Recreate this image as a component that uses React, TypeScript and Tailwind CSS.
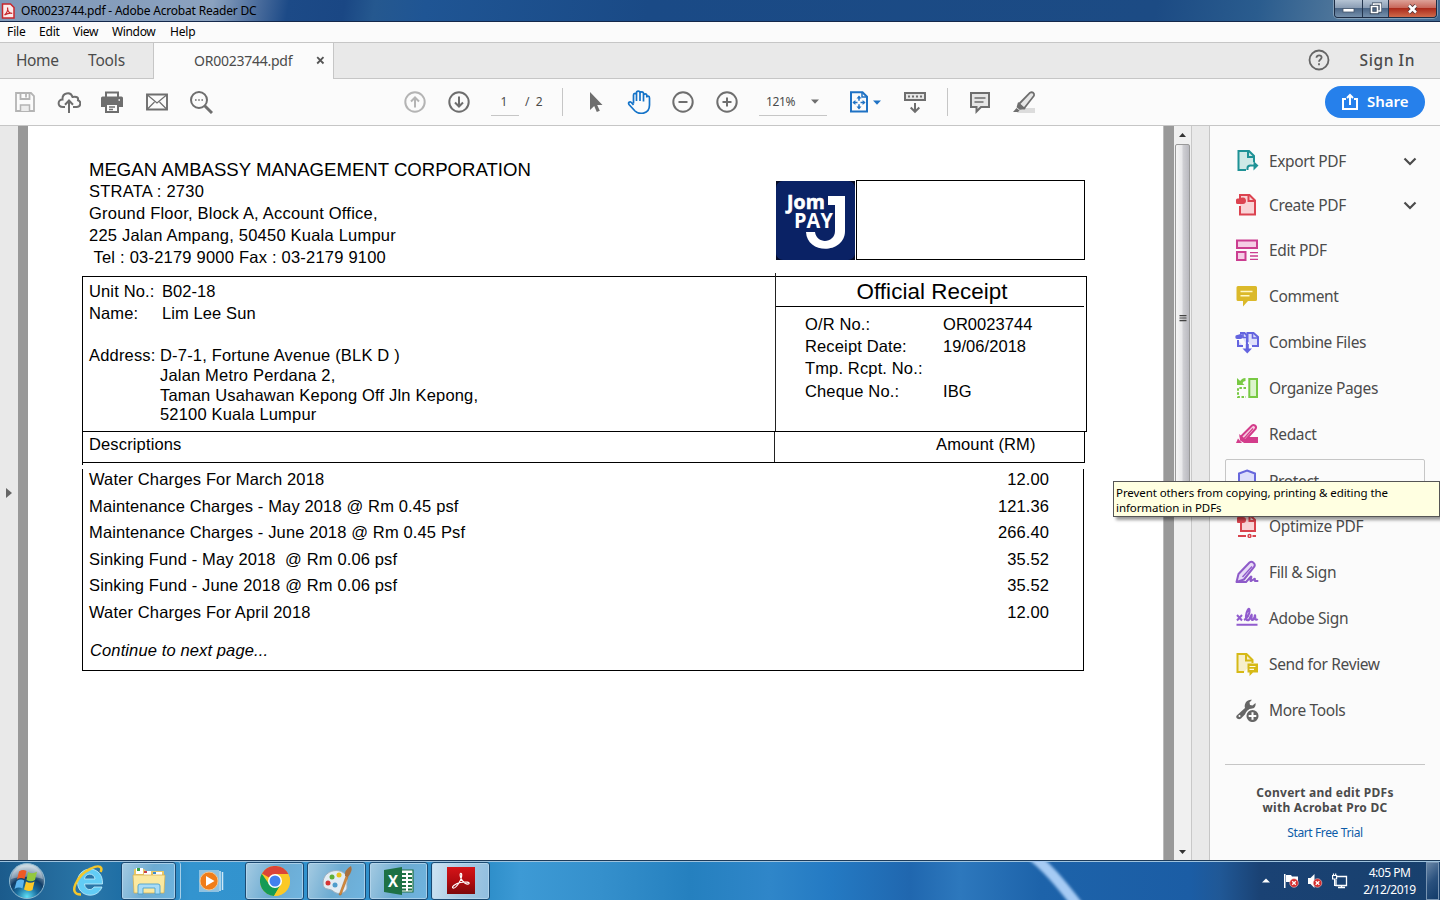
import React from "react";

type Kids = { children?: React.ReactNode };

function Icon({ children, className = "" }: Kids & { className?: string }) {
  return (
    <svg width="24" height="24" viewBox="0 0 24 24" fill="none" strokeWidth="2" className={`block shrink-0 ${className}`}>
      {children}
    </svg>
  );
}

function TitleBar() {
  return (
    <div className="relative flex h-[22px] shrink-0 items-start border-b border-[#14284b] bg-[linear-gradient(100deg,#7f98b8_0px,#8ba2bf_210px,#4a6c9c_255px,#1c4a87_285px,#1a4784_340px,#25588f_370px,#1f5594_420px,#1a4a86_640px,#1c4b84_1140px,#2a5c8e_1240px,#53799c_1330px,#3d6690_1440px)]">
      <svg width="14" height="16" viewBox="0 0 14 16" className="ml-px mt-[3px] shrink-0">
        <path d="M1.5 1h8l3.500 3.500v10.500h-11.500z" fill="#fbeaea" stroke="#c8262b" strokeWidth="1.500" />
        <path d="M3.500 12c2-1.500 4-5 3-7.500M6.600 6c.5 3 2 4.300 4.600 4.300-3-.8-5 .2-7.700 1.700" fill="none" stroke="#c8262b" strokeWidth="1.200" />
      </svg>
      <span className="ml-[6px] mt-[2px] whitespace-pre text-[12px] leading-[18px] tracking-[-0.2px] text-black">OR0023744.pdf - Adobe Acrobat Reader DC</span>
      <div className="ml-auto mr-[3px] flex h-[18px] overflow-hidden rounded-b-[4px] border border-t-0 border-[#1c2c44] shadow-[0_0_0_1px_#a9bccd99]">
        <div className="flex w-[28px] items-center justify-center border-r border-[#24364e] bg-[linear-gradient(#b5c4d4,#8b9eb5_45%,#4b6686_50%,#7590ac)]">
          <svg width="13" height="8" viewBox="0 0 13 8"><rect x="1" y="3.500" width="11" height="3.500" fill="#fff" stroke="#44556b" strokeWidth=".8" /></svg>
        </div>
        <div className="flex w-[26px] items-center justify-center border-r border-[#24364e] bg-[linear-gradient(#b5c4d4,#8b9eb5_45%,#4b6686_50%,#7590ac)]">
          <svg width="14" height="13" viewBox="0 0 14 13" fill="none">
            <path d="M4.500 3V2h7v7h-2" stroke="#344458" strokeWidth="3" /><path d="M2.500 4.500h6v6h-6z" stroke="#344458" strokeWidth="3.400" />
            <path d="M4.500 3V2h7v7h-2M2.500 4.500h6v6h-6z" stroke="#fff" strokeWidth="1.700" />
          </svg>
        </div>
        <div className="flex w-[47px] items-center justify-center bg-[linear-gradient(#dda198,#c8685b_45%,#ac2b1b_50%,#cf6a4b)]">
          <svg width="13" height="12" viewBox="0 0 13 12"><path d="M3 2.500l7 7M10 2.500l-7 7" stroke="#4d3338" strokeWidth="4" /><path d="M3 2.500l7 7M10 2.500l-7 7" stroke="#fff" strokeWidth="2.500" /></svg>
        </div>
      </div>
    </div>
  );
}

function MenuBar() {
  return (
    <div className="flex h-[20px] shrink-0 items-center bg-[#fbfbfb] pl-[7px] text-[12px] leading-[18px] text-black">
      <span className="w-[32px] tracking-[-0.1px]">File</span>
      <span className="w-[34px] tracking-[-0.2px]">Edit</span>
      <span className="w-[39px] tracking-[-0.3px]">View</span>
      <span className="w-[58px] tracking-[-0.35px]">Window</span>
      <span className="tracking-[-0.2px]">Help</span>
    </div>
  );
}

function TabBar() {
  return (
    <div className="flex h-[37px] shrink-0 border-y border-[#c6c6c6] bg-[#e9e9e9] text-[#4b4b4b]">
      <div className="flex w-[154px] shrink-0 items-center border-r border-[#c6c6c6] pl-4 text-[15.500px]">
        <span className="w-[72px] tracking-[-0.4px]">Home</span>
        <span className="tracking-[-0.15px]">Tools</span>
      </div>
      <div className="-mb-px flex w-[180px] shrink-0 items-center border-r border-[#c6c6c6] bg-[#fbfbfb] pb-[2px] pl-[40px] text-[14px]">
        <span className="w-[122px] tracking-[-0.25px]">OR0023744.pdf</span>
        <svg width="9" height="9" viewBox="0 0 9 9"><path d="M1.200 1.200l6.300 6.300M7.500 1.200L1.200 7.500" stroke="#555" strokeWidth="1.800" /></svg>
      </div>
      <div className="ml-auto flex items-center pr-[25px]">
        <svg width="22" height="22" viewBox="0 0 22 22" fill="none" stroke="#666" strokeWidth="1.800" className="mb-[2px] mr-[30px]">
          <circle cx="11" cy="11" r="9.500" />
          <path d="M8.500 8.700c0-3.200 5.100-3 5.100-.1 0 1.900-2.600 1.900-2.600 4.100M11 14.200v2" />
        </svg>
        <span className="text-[15.500px] font-medium tracking-[0.6px]">Sign In</span>
      </div>
    </div>
  );
}

function Toolbar() {
  return (
    <div className="flex h-[47px] shrink-0 items-center border-b border-[#c6c6c6] bg-[#fbfbfb] pl-[13px] text-[#4b4b4b]">
      <Icon className="stroke-[#b4b4b4]"><path d="M3 3h15l3 3v15H3zM7.500 3v6h9V3M13 4v3.500" strokeWidth="1.800" /><path d="M7.500 21v-6h9v6" fill="#ececec" strokeWidth="1.500" /></Icon>
      <Icon className="ml-5 stroke-[#6e6e6e]"><path d="M8 17H6C0 17 .5 9.500 5.500 9.500 5 3 13.500 1 15.500 7c5-.8 6 .8 5.500 3.300C24.500 11.500 24 17 19.500 17H16M12 23V11M8 14.700l4-4.200 4 4.200" /></Icon>
      <Icon className="ml-[19px] stroke-[#6e6e6e]"><path d="M6 7V2.500h12V7" /><path d="M1 8q0-1.500 1.500-1.500h19Q23 6.500 23 8v9h-4v-3H5v3H1z" fill="#6e6e6e" stroke="none" /><path d="M6 14h12v8H6z" fill="#fbfbfb" /><path d="M9 17h6M9 19.500h4" strokeWidth="1.300" /><path d="M18.500 10h1.500" stroke="#fff" strokeWidth="1.500" /></Icon>
      <Icon className="ml-[21px] stroke-[#6e6e6e]"><path d="M2 4.500h20v15H2z" strokeWidth="1.900" /><path d="M2.500 5l9.500 8 9.500-8M2.500 19l7-7M21.500 19l-7-7" strokeWidth="1.200" /></Icon>
      <Icon className="ml-5 stroke-[#6e6e6e]"><circle cx="10" cy="10" r="8" /><path d="M15.700 15.700L23 23" strokeWidth="3" /><path d="M6 10h1.600M9.200 10h1.600M12.400 10H14" strokeWidth="1.700" /></Icon>
      <Icon className="ml-[190px] stroke-[#b4b4b4]"><circle cx="12" cy="12" r="9.700" /><path d="M12 17.500V8M8 11.500l4-4 4 4" /></Icon>
      <Icon className="ml-5 stroke-[#6e6e6e]"><circle cx="12" cy="12" r="9.700" /><path d="M12 6.500V16M8 12.500l4 4 4-4" /></Icon>
      <div className="ml-[20px] flex h-[28px] w-[28px] items-center justify-center border-b border-[#c6c6c6] pr-[2px] text-[12px]">1</div>
      <span className="ml-[6px] w-[20px] whitespace-pre text-[12px]">/  2</span>
      <div className="ml-[17px] h-[28px] w-px bg-[#c6c6c6]" />
      <Icon className="ml-[21px]"><path d="M6 2v18l4.200-4 2.600 6 3-1.300-2.600-5.700h5.300z" fill="#6e6e6e" /></Icon>
      <Icon className="ml-[19px] stroke-[#1473c8]"><path d="M6.500 13.500V5c0-2.200 3-2.200 3 0v6V2.800c0-2.200 3.500-2.200 3.500 0V11 3.500c0-2.200 3.500-2.200 3.500 0v8-6c0-2.200 3.300-2.200 3.300 0v2c0-2.100 2.700-1.800 2.700.5v7c0 10-11 9.500-14.500 6L2 14.500c-1.200-2 .8-3.300 2.200-2.200L6.500 15" strokeWidth="1.700" /></Icon>
      <Icon className="ml-5 stroke-[#6e6e6e]"><circle cx="12" cy="12" r="9.700" /><path d="M7.500 12h9" /></Icon>
      <Icon className="ml-5 stroke-[#6e6e6e]"><circle cx="12" cy="12" r="9.700" /><path d="M7.500 12h9M12 7.500v9" /></Icon>
      <div className="ml-5 flex h-[28px] w-[68px] items-center border-b border-[#c6c6c6] pl-[7px] text-[12px]">
        <span className="w-[45px] tracking-[-0.4px]">121%</span>
        <svg width="8" height="5" viewBox="0 0 8 5"><path d="M0 .5h8L4 4.800z" fill="#6e6e6e" /></svg>
      </div>
      <Icon className="ml-5 stroke-[#1f72c4]">
        <path d="M4 2.200h11.500L20 6.700v14.700H4z" /><path d="M15 2.500V7h5" strokeWidth="1.500" />
        <path d="M12 6.800v4M12 14.200v4M6.500 12.500h4M13.500 12.500h4" strokeWidth="1.500" />
        <path d="M12 5.500l2.500 3h-5zM12 19.500l2.500-3h-5zM5.400 12.500l3-2.500v5zM18.600 12.500l-3-2.500v5z" fill="#1f72c4" stroke="none" />
      </Icon>
      <svg width="8" height="5" viewBox="0 0 8 5" className="ml-[2px]"><path d="M0 .5h8L4 4.800z" fill="#1f72c4" /></svg>
      <Icon className="ml-[22px] stroke-[#6e6e6e]"><path d="M2 3h20v7H2z" fill="#e6e6e6" /><path d="M5 6.500h14" strokeDasharray="2 2" strokeWidth="1.800" /><path d="M12 13v8.500M7.700 17.500l4.300 4.300 4.300-4.300" /></Icon>
      <div className="ml-[20px] h-[28px] w-px bg-[#c6c6c6]" />
      <Icon className="ml-5 stroke-[#6e6e6e]"><path d="M3 3h18v14h-8l-4.500 4.500V17H3z" fill="#e6e6e6" /><path d="M6.500 8h11M6.500 12h9" strokeWidth="1.400" /></Icon>
      <Icon className="ml-5 stroke-[#6e6e6e]"><path d="M7 18h16v5H5z" fill="#dcdcdc" stroke="none" /><path d="M7 14L18 2.700c2.500-1.300 4.700.5 4 3L12 18.500z" fill="#e6e6e6" strokeWidth="1.800" /><path d="M6.500 13.500l5.500 5-4 .5-2.500-2z" fill="#6e6e6e" strokeWidth="1.600" /><path d="M4.500 18l3 2.500-1.500 1.500H1z" fill="#6e6e6e" stroke="none" /></Icon>
      <div className="ml-auto mr-[15px] flex h-[32px] w-[100px] items-center rounded-full bg-[#2680eb] pl-[16px] text-[15px] font-semibold text-white">
        <svg width="18" height="18" viewBox="0 0 18 18" fill="none" stroke="#fff" strokeWidth="2"><path d="M5 6H2v10h14V6h-3M9 12V3M6 5l3-3 3 3" /></svg>
        <span className="ml-2 pb-[2px] tracking-[0px]">Share</span>
      </div>
    </div>
  );
}

const headerLines = ["STRATA : 2730", "Ground Floor, Block A, Account Office,", "225 Jalan Ampang, 50450 Kuala Lumpur", " Tel : 03-2179 9000 Fax : 03-2179 9100"];
const receipt = [["O/R No.:", "OR0023744"], ["Receipt Date:", "19/06/2018"], ["Tmp. Rcpt. No.:", ""], ["Cheque No.:", "IBG"]];
const charges = [
  ["Water Charges For March 2018", "12.00"],
  ["Maintenance Charges - May 2018 @ Rm 0.45 psf", "121.36"],
  ["Maintenance Charges - June 2018 @ Rm 0.45 Psf", "266.40"],
  ["Sinking Fund - May 2018  @ Rm 0.06 psf", "35.52"],
  ["Sinking Fund - June 2018 @ Rm 0.06 psf", "35.52"],
  ["Water Charges For April 2018", "12.00"],
];

function JomPayLogo() {
  return (
    <svg width="79" height="79" viewBox="0 0 79 79" className="mt-px">
      <rect width="79" height="79" fill="#050b26" />
      <rect width="79" height="79" rx="7" fill="#0a2265" />
      <path d="M52 15h17v35c0 23-38 24-39 1h9c2 13 20 11 20-1V24h-7z" fill="#fff" />
      <g fill="#fff" fontFamily="Open Sans, sans-serif" fontWeight="700">
        <text x="11" y="28" fontSize="20" textLength="38" lengthAdjust="spacingAndGlyphs" stroke="#fff" strokeWidth=".6">Jom</text>
        <text x="18" y="47" fontSize="21" textLength="39" lengthAdjust="spacingAndGlyphs" stroke="#0a2265" strokeWidth="2" paintOrder="stroke">PAY</text>
      </g>
    </svg>
  );
}

function DocumentPage() {
  return (
    <div className="flex h-full w-[1135px] shrink-0 flex-col bg-white pl-[54px] pt-[32px] font-['Liberation_Sans',Arial,sans-serif] text-[16.500px] tracking-[0.14px] text-black">
      <div className="flex h-[118px] shrink-0">
        <div className="w-[694px] whitespace-pre pl-[7px] pt-px leading-[22px] tracking-[0.22px]">
          <div className="-mb-px text-[18.600px] tracking-[-0.01px]">MEGAN AMBASSY MANAGEMENT CORPORATION</div>
          {headerLines.map((l) => <div key={l}>{l}</div>)}
        </div>
        <div className="flex pt-[22px]">
          <JomPayLogo />
          <div className="ml-[1px] h-[80px] w-[229px] border border-black" />
        </div>
      </div>
      <div className="flex h-[156px] w-[1005px] shrink-0 border border-black">
        <div className="w-[692px] whitespace-pre pl-[6px] pt-[3px]">
          <div className="flex h-[22px] items-center"><span className="w-[73px]">Unit No.:</span><span className="tracking-[0.05px]">B02-18</span></div>
          <div className="flex h-[22px] items-center"><span className="w-[73px]">Name:</span><span className="tracking-[0.1px]">Lim Lee Sun</span></div>
          <div className="flex pt-[22px] leading-[19.800px] tracking-[0.18px]">
            <span className="w-[71px]">Address:</span>
            <div>
              <div>D-7-1, Fortune Avenue (BLK D )</div>
              <div>Jalan Metro Perdana 2,</div>
              <div>Taman Usahawan Kepong Off Jln Kepong,</div>
              <div>52100 Kuala Lumpur</div>
            </div>
          </div>
        </div>
        <div className="-mt-[4px] w-[311px] border-l border-[#222] pt-[3px]">
          <div className="mr-[2px] flex h-[31px] items-center justify-center border-b border-black pl-1 pt-px text-[22.400px] tracking-[0.05px]">Official Receipt</div>
          <div className="pl-[29px] pt-[5.800px]">
            {receipt.map(([k, v]) => (
              <div key={k} className="flex h-[22.400px] items-center"><span className="w-[138px]">{k}</span><span className="tracking-[0.05px]">{v}</span></div>
            ))}
          </div>
        </div>
      </div>
      <div className="-mt-px flex h-[32px] w-[1003px] shrink-0 border border-black">
        <div className="w-[692px] border-r border-[#222] pl-[6px] leading-[25px]">Descriptions</div>
        <div className="pl-[161px] leading-[25px]">Amount (RM)</div>
      </div>
      <div className="flex h-[6px] w-[1003px] shrink-0"><div className="h-[2px] w-px bg-black" /></div>
      <div className="h-[202px] w-[1002px] shrink-0 border border-t-0 border-black pl-[6px] pr-[34px]">
        <div className="-mt-[3px]">
          {charges.map(([name, amount]) => (
            <div key={name} className="flex h-[26.600px] items-center justify-between whitespace-pre"><span>{name}</span><span className="tracking-[0.1px]">{amount}</span></div>
          ))}
        </div>
        <div className="mt-[12.400px] pl-px leading-[24px] tracking-[0.12px] italic">Continue to next page...</div>
      </div>
    </div>
  );
}

const tools: { label: string; h: string; art: React.ReactNode; chevron?: boolean; hover?: boolean }[] = [
  { label: "Export PDF", h: "h-[44px]", chevron: true, art: <g stroke="#1f9296"><path d="M11 21H3.500V2h10.500l5 5v6" fill="#cfe9e6" /><path d="M13 2.500V8h6" /><path d="M12.500 21v-2c0-2 1-2.500 3-2.500h4" fill="none" /><path d="M18.500 12l5 4.500-5 5z" fill="#1f9296" stroke="none" /></g> },
  { label: "Create PDF", h: "h-[44px]", chevron: true, art: <g stroke="#dc4350"><path d="M5 13v8.500h15V7.500L14.500 2H5v4" fill="#f9d3d6" /><path d="M13.500 2.500V8h6" fill="none" /><path d="M2.500 5.500C6 5.500 6 4.500 8 4.500c2.500 0 3 2 3 3.300 0 2-1 3.200-3 3.200H2.500Q1 11 1 9.500V7q0-1.500 1.500-1.500z" fill="#dc4350" stroke="none" /></g> },
  { label: "Edit PDF", h: "h-[46px]", art: <g stroke="#cb3d90"><path d="M2 2.500h20V10H2zM2 14h8.500v8H2z" fill="#f5cde5" /><path d="M15 14.700h8M15 18h8M15 21.300h8" strokeWidth="1.300" /></g> },
  { label: "Comment", h: "h-[46px]", art: <g><path d="M3 2h17.500q1.500 0 1.500 1.500v12q0 1.500-1.500 1.500H13l-5 5.500V17H3q-1.500 0-1.500-1.500v-12Q1.500 2 3 2z" fill="#dbb92a" /><path d="M5.500 7.500h12M5.500 11.700h9" stroke="#fff8c8" strokeWidth="1.500" /></g> },
  { label: "Combine Files", h: "h-[46px]", art: <g stroke="#6464df"><path d="M3 10v6h5M5 3h4.500L12 5.500V16" fill="#dedffb" /><path d="M12.500 12V3h6L23 7v9h-6" fill="#dedffb" /><path d="M17.500 3v5H23M8 3.500v4h4" fill="none" strokeWidth="1.600" /><path d="M2 5C4 5 4 4 5.500 4 8.500 4 8.500 9 5.500 9H2Q.3 9 .3 7T2 5z" fill="#6464df" stroke="none" /><path d="M12.300 14v5" strokeWidth="3" /><path d="M7.500 18.500h9.500L12.300 23.500z" fill="#6464df" stroke="none" /></g> },
  { label: "Organize Pages", h: "h-[46px]", art: <g stroke="#78c943"><path d="M14.300 3H22v18h-7.700z" fill="#dcf4cd" /><path d="M11 12H3v9h8" strokeDasharray="2.500 1.600" /><path d="M10.500 3.500c-2 0-3.500 1-4.500 3" strokeWidth="3" /><path d="M2 2v7h7.500z" fill="#78c943" stroke="none" /></g> },
  { label: "Redact", h: "h-[46px]", art: <g stroke="#d33c8b"><path d="M13 15h10v6H8z" fill="#d33c8b" stroke="none" /><path d="M6 14.500L17 3.500c2-1.500 5 .8 3.700 3.200L10 18.500z" fill="#f8cfe2" /><path d="M9 16.500L18 6.500" strokeWidth="1.200" /><path d="M5.500 14.500l4.500 4-2 .7-2-1.200z" fill="#d33c8b" /><path d="M3 16.500l4 4.500H1z" fill="#d33c8b" stroke="none" /></g> },
  { label: "Protect", h: "mt-[2px] mb-px h-[43px]", hover: true, art: <g stroke="#6767dc"><path d="M12 1.500l8 3v8c0 5-3.500 8-8 10-4.500-2-8-5-8-10v-8z" fill="#dddefb" /></g> },
  { label: "Optimize PDF", h: "h-[46px]", art: <g stroke="#d9434d"><path d="M6 8v9h14V6L16 2H7" fill="#f9d3d6" /><path d="M14.500 2v5H20" /><path d="M3 3h5q3 0 3 3t-3 3H3Q2 9 2 8V4q0-1 1-1z" fill="#d9434d" stroke="none" /><path d="M3 22h8M17.500 22H21" /><circle cx="14.500" cy="22" r="1.400" strokeWidth="1.500" /></g> },
  { label: "Fill & Sign", h: "h-[46px]", art: <g stroke="#8e5bc9" strokeLinejoin="round"><path d="M1.500 22l2-8L14.500 2.500c2.500-2 6.500 1 4.800 4.200L9 19.500z" fill="#e8dbf7" /><path d="M7.500 17L17 6.500" strokeWidth="1.300" /><path d="M1.500 22H11l5-5.500c1.500 0-2 5 .2 4.500l3.300-2.300c1.300 0-.8 2.300.8 2.300h3" /></g> },
  { label: "Adobe Sign", h: "h-[46px]", art: <g stroke="#915cce"><path d="M2 9l5 5.500M7 9l-5 5.500M1.500 18.800h21" /><path d="M9 14c3-1.500 6-6 5.500-10-.5-3-3 1-3.500 6-.3 6 3 5 4.500 1 2-5 1-1 1 1 .2 3 2 2.500 3-1 1-4 .5 0 .7 1.500.3 1.500 1.300 1.500 2.500.5" strokeWidth="2.200" /></g> },
  { label: "Send for Review", h: "h-[46px]", art: <g stroke="#d6b916"><path d="M9 20H2.500V2h9l6 6v3" fill="#f7efca" /><path d="M11 2v6.500h6.500" /><path d="M12.500 11.500h10.500v9h-5L14.500 24v-3.500h-2z" fill="#d6b916" stroke="none" /><path d="M14.500 14.500h6M14.500 17.300h4.500" stroke="#fffbdd" strokeWidth="1.200" /></g> },
  { label: "More Tools", h: "h-[46px]", art: <g fill="#666"><path d="M1.700 17.500L10 10c-1.200-4.500 2-9 7-8.300L14.500 4.500 15 7l2.500.5L20.500 5c.8 3.500-2 6.500-5.500 6.300L6 20.500c-2.500 2-6-.7-4.300-3z" /><circle cx="4.500" cy="18" r="1" fill="#fff" /><circle cx="17.500" cy="18" r="6.800" fill="#666" stroke="#fbfbfb" strokeWidth="1.500" /><path d="M13.700 18h7.600M17.500 14.200v7.600" stroke="#fff" strokeWidth="2" /></g> },
];

function ToolsPanel() {
  return (
    <div className="flex w-[230px] shrink-0 flex-col bg-[#fbfbfb] px-[15px] pt-[13px] text-[#4b4b4b]">
      {tools.map((t) => (
        <div key={t.label} className={`flex ${t.h} shrink-0 items-center text-[15.500px] ${t.hover ? "rounded-[2px] border border-[#c6c6c6] pl-[9px]" : "pl-[10px]"}`}>
          <Icon>{t.art}</Icon>
          <span className="ml-[10px] whitespace-nowrap pt-[2px] tracking-[-0.36px]">{t.label}</span>
          {t.chevron && <svg width="14" height="9" viewBox="0 0 14 9" fill="none" className="ml-auto mr-[8px]"><path d="M1.500 1.500L7 7l5.500-5.500" stroke="#4b4b4b" strokeWidth="2.200" /></svg>}
        </div>
      ))}
      <div className="mt-[31px] border-t border-[#c6c6c6] pt-[20px] text-center">
        <div className="text-[12px] font-bold leading-[15px] tracking-[0.26px]"><div>Convert and edit PDFs</div><div>with Acrobat Pro DC</div></div>
        <div className="mt-[10px] text-[12px] leading-[16px] tracking-[-0.38px] text-[#0d5ba8]">Start Free Trial</div>
      </div>
    </div>
  );
}

function Scrollbar() {
  return (
    <div className="flex w-[18px] shrink-0 flex-col items-center border-r border-[#c8c8c8] bg-[#f0f0f0] px-px">
      <div className="flex h-[18px] items-center"><svg width="7" height="4" viewBox="0 0 7 4"><path d="M0 4l3.500-4L7 4z" fill="#333" /></svg></div>
      <div className="flex h-[350px] w-[15px] items-center justify-center rounded-[2px] border border-[#999] bg-[linear-gradient(90deg,#f5f5f5,#e8e8ea_45%,#cfcfd3_55%,#b9b9bf)]">
        <svg width="8" height="8" viewBox="0 0 8 8"><path d="M.5.500h7M.5 3h7M.5 5.500h7" stroke="#444" /><path d="M.5 1.500h7M.5 4h7M.5 6.500h7" stroke="#888" strokeWidth=".5" /></svg>
      </div>
      <div className="mt-auto flex h-[16px] items-center"><svg width="7" height="4" viewBox="0 0 7 4"><path d="M0 0l3.500 4L7 0z" fill="#333" /></svg></div>
    </div>
  );
}

function TaskButton({ children, active }: Kids & { active?: boolean }) {
  return (
    <div className={`mr-[3px] flex h-[38px] w-[59px] shrink-0 items-center justify-center rounded-[3px] border border-[#1b4a72] shadow-[inset_0_0_0_1px_#b9d9efbb] ${active ? "bg-[linear-gradient(100deg,#cfe4f2,#a9cbe4_50%,#8fbddf)]" : "bg-[linear-gradient(110deg,#a5cbe2,#6cabd2_50%,#6fb4df)]"}`}>
      {children}
    </div>
  );
}

function ErrorDot({ x }: { x: number }) {
  return <g><circle cx={x} cy="10" r="4.300" fill="#d32b2b" stroke="#f3c4c4" strokeWidth=".6" /><path d={`M${x - 1.800} 8.200l3.600 3.600M${x + 1.800} 8.200l-3.600 3.600`} stroke="#fff" strokeWidth="1.300" /></g>;
}

function Taskbar() {
  return (
    <div className="relative flex h-[40px] shrink-0 items-center overflow-hidden border-t border-[#1d3b5a] bg-[linear-gradient(90deg,#1b5b8c_0px,#2a76a8_90px,#1f6fa5_120px,#3394cf_190px,#2f8fca_490px,#3d9ad5_520px,#3590cc_600px,#2580bf_690px,#2f86c9_770px,#247ac3_830px,#2067af_910px,#2d78bd_960px,#1d63aa_1040px,#1b5da5_1190px,#205896_1220px,#1a4274_1260px,#18406d_1440px)] shadow-[inset_0_1px_0_#9fc3de]">
      <svg width="1440" height="39" viewBox="0 0 1440 39" className="pointer-events-none absolute left-0 top-0">
        <defs><filter id="soft" x="-40%" y="-20%" width="180%" height="140%" colorInterpolationFilters="sRGB"><feGaussianBlur stdDeviation="1.500" /></filter></defs>
        <path d="M1029-8c17 13 30 28 53 58" fill="none" stroke="#a6cbf4" strokeWidth="10.500" filter="url(#soft)" />
      </svg>
      <svg width="38" height="38" viewBox="0 0 38 38" className="relative ml-[8px] shrink-0">
        <defs>
          <radialGradient id="orb" cx=".5" cy=".95" r=".9"><stop offset="0" stopColor="#5fe0f5" /><stop offset=".35" stopColor="#176a9d" /><stop offset=".6" stopColor="#123d66" /><stop offset="1" stopColor="#c5d5df" /></radialGradient>
        </defs>
        <circle cx="19" cy="19" r="17.500" fill="url(#orb)" stroke="#8fb9d0" strokeWidth="1" />
        <path d="M3 17C5-1 33-1 35 17 26 14 13 14 3 17z" fill="#fff" opacity=".3" />
        <path d="M11 9.500q4-2.500 7.500-.5L16.500 17q-4-2-7.500.5z" fill="#ee5a24" />
        <path d="M20 10q4.500 2.500 9-.2L27 18q-4 2.500-8.500 0z" fill="#93c83e" />
        <path d="M8.700 19q4-2.500 7.500-.5L14.500 26.500q-4-2-8 .5z" fill="#5db5f0" />
        <path d="M18 19.500q4.500 2.500 8.500 0L24.500 28q-4 2-8.500-.5z" fill="#fdc827" />
      </svg>
      <svg width="34" height="34" viewBox="0 0 34 34" className="relative ml-[26px] shrink-0">
        <path fillRule="evenodd" d="M30.500 20H12.500c.5 6.500 7.500 7 9.500 3h8C25 36 5.500 33 5.500 18 5.500 1 31.500 0 30.500 20zM12.500 15h10.500c-.5-6.500-10-6.500-10.500 0z" fill="#62ccf5" stroke="#c4f0ff" strokeWidth=".8" />
        <path d="M9 30.500C-5 31 5 11 19 4.500c9-4.500 12-1 9.500 3.500" fill="none" stroke="#f3c72c" strokeWidth="2.500" />
      </svg>
      <div className="relative ml-[15px] flex h-[38px] w-[60px] shrink-0 rounded-[3px] border-r border-[#a5cfe8]">
        <div className="flex h-[38px] w-[55px] items-center justify-center rounded-[3px] border border-[#1b4a72] bg-[linear-gradient(110deg,#a5cbe2,#6cabd2_50%,#6fb4df)] shadow-[inset_0_0_0_1px_#b9d9efbb]">
          <svg width="34" height="30" viewBox="0 0 34 30">
            <path d="M2 3h10l2 2h18v22H2z" fill="#e9c866" /><path d="M4 2h7v6H4z" fill="#fff" /><path d="M5 2h3v3H5z" fill="#37a345" /><path d="M12 5h7v4h-7zM21 6h9v4h-9z" fill="#fff" /><path d="M12 5h3v2h-3z" fill="#c44" /><path d="M21 6h3v2h-3z" fill="#3a8bd0" />
            <path d="M1 9h32l-1 18H2z" fill="#fbe9a0" stroke="#d4ad4c" strokeWidth=".7" />
            <path d="M6 28v-8q0-2 2-2h18q2 0 2 2v8h-5v-6H11v6z" fill="#a9dcf6" stroke="#4c9fcc" strokeWidth=".9" />
          </svg>
        </div>
      </div>
      <svg width="28" height="26" viewBox="0 0 28 26" className="relative ml-[17px] shrink-0">
        <path d="M1 2h20v22H1z" fill="#8ec2e2" /><path d="M22 3v20M24.500 4v18" stroke="#cfe8f6" strokeWidth="1.500" />
        <circle cx="11" cy="13" r="9" fill="#f07d1a" stroke="#f5c48c" /><path d="M8 8l8.500 5L8 18z" fill="#fff" />
      </svg>
      <div className="relative ml-[19px] flex">
        <TaskButton>
          <svg width="30" height="30" viewBox="0 0 30 30"><circle cx="15" cy="15" r="15" fill="#fbc926" /><path d="M15 15L2 7.500A15 15 0 0 1 28.300 8H15z" fill="#dc4437" /><path d="M1.800 7.800A15 15 0 0 0 14 30l7-12H9z" fill="#169b55" /><path d="M28.500 8.500H15l6.500 9L14 30A15 15 0 0 0 28.500 8.500z" fill="#fbc926" /><circle cx="15" cy="15" r="7" fill="#fff" /><circle cx="15" cy="15" r="5.500" fill="#4280ef" /></svg>
        </TaskButton>
        <TaskButton>
          <svg width="32" height="32" viewBox="0 0 32 32"><path d="M2 18C2 6 17 2 24 9c5 5 1 8 2 12 1 7-9 10-14 5-3-3-10 0-10-8z" fill="#e3edf4" stroke="#9cafbd" /><circle cx="7" cy="18" r="2.500" fill="#d63434" /><circle cx="11" cy="12" r="2.500" fill="#5fae38" /><circle cx="18" cy="10" r="2.500" fill="#ecc21d" /><circle cx="14" cy="20" r="2.500" fill="#4f9dcc" /><path d="M18 30l7-19 2 1-7 18z" fill="#d58a3b" stroke="#a66426" strokeWidth=".5" /><path d="M24 11q-1-6 6-10 2 5-3 11z" fill="#a8703f" /></svg>
        </TaskButton>
        <TaskButton>
          <svg width="32" height="30" viewBox="0 0 32 30"><path d="M15 4h15v22H15z" fill="#fff" stroke="#217346" strokeWidth="1.200" /><path d="M19 8h4M25 8h4M19 12h4M25 12h4M19 16h4M25 16h4M19 20h4M25 20h4M19 23.500h4M25 23.500h4" stroke="#217346" strokeWidth="2" /><path d="M1 4l18-3v28L1 26z" fill="#1e7145" /><text x="5" y="21" fill="#fff" fontSize="16" fontWeight="700" fontFamily="Open Sans, sans-serif" textLength="10" lengthAdjust="spacingAndGlyphs">X</text></svg>
        </TaskButton>
        <TaskButton active>
          <svg width="28" height="27" viewBox="0 0 28 27"><defs><linearGradient id="red" x2="0" y2="1"><stop stopColor="#d51418" /><stop offset=".5" stopColor="#b40b10" /><stop offset="1" stopColor="#7d080b" /></linearGradient></defs><path d="M0 0h28v27H0z" fill="url(#red)" /><path d="M6 21c-2-1 2.500-4.500 7.500-5.500 5.500-1.100 9.500-.3 8.500 1.200-1.500 1.500-7-1.200-8.500-6.700-1.200-4.500 1.500-5 1.200-1C14.200 14 8.500 22 6 21z" fill="none" stroke="#fff" strokeWidth="1.200" /></svg>
        </TaskButton>
      </div>
      <div className="relative ml-auto flex h-full items-center text-white">
        <svg width="8" height="5" viewBox="0 0 8 5" className="mr-[14px]"><path d="M0 4.500L4 .5l4 4z" fill="#fff" /></svg>
        <svg width="16" height="16" viewBox="0 0 16 16" className="mr-[8px]"><path d="M0 1h1.500v14H0z" fill="#fff" /><path d="M2 2h5l1 1.500h6V9H2z" fill="#fff" /><ErrorDot x={10} /></svg>
        <svg width="16" height="16" viewBox="0 0 16 16" className="mr-[8px]"><path d="M0 5h2.500l4-4v14l-4-4H0z" fill="#fff" /><ErrorDot x={9.500} /></svg>
        <svg width="16" height="16" viewBox="0 0 16 16" className="mr-[12px]" fill="none" stroke="#fff"><path d="M5 3.500h9.500v9H4V7M6 14.500h7M9.500 12.500v2" strokeWidth="1.300" /><path d="M.6 2.500h4V6h-4zM1.500.5v2M3.700.5v2M2.600 6v6.500H4" strokeWidth="1.200" /></svg>
        <div className="w-[59px] whitespace-nowrap text-center text-[12px] leading-[17px] tracking-[-0.5px]"><div>4:05 PM</div><div>2/12/2019</div></div>
        <div className="ml-[7px] mr-px h-[38px] w-[13px] border border-[#7894b2] bg-[linear-gradient(135deg,#6986a6,#2a517e_50%,#123b69)]" />
      </div>
    </div>
  );
}

export default function App() {
  return (
    <div className="relative flex h-[900px] w-[1440px] flex-col overflow-hidden bg-white font-['Noto_Sans','Open_Sans',sans-serif]">
      <TitleBar />
      <MenuBar />
      <TabBar />
      <Toolbar />
      <div className="flex h-[734px] shrink-0 overflow-hidden">
        <div className="flex w-[18px] shrink-0 items-center justify-center bg-[#e9e9e9]"><svg width="6" height="10" viewBox="0 0 6 10"><path d="M0 0l6 5-6 5z" fill="#666" /></svg></div>
        <div className="w-[10px] shrink-0 bg-[#999]" />
        <DocumentPage />
        <div className="w-[11px] shrink-0 border-l border-[#bbb] bg-[#999]" />
        <Scrollbar />
        <div className="w-[18px] shrink-0 border-r border-[#c6c6c6] bg-[#e9e9e9]" />
        <ToolsPanel />
      </div>
      <Taskbar />
      <div className="absolute left-[1113px] top-[481px] h-[36px] w-[327px] whitespace-nowrap border border-[#555] bg-[#ffffe1] pl-[2px] pt-[3px] text-[11.500px] leading-[15px] tracking-[-0.08px] text-black shadow-[3px_3px_3px_#0006]">
        <div>Prevent others from copying, printing &amp; editing the</div>
        <div>information in PDFs</div>
      </div>
    </div>
  );
}
